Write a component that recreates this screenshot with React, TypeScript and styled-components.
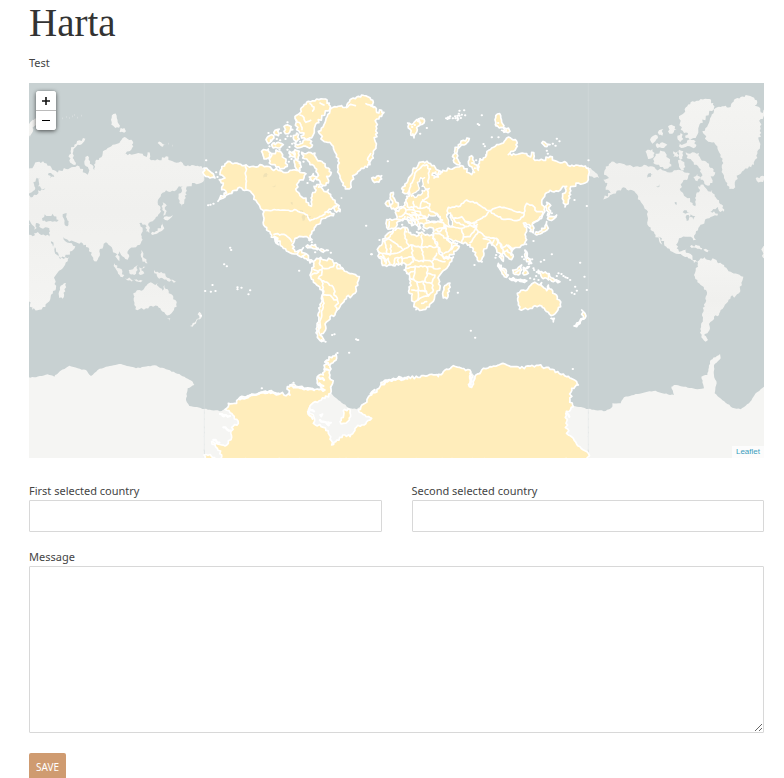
import React from "react";
import styled, { createGlobalStyle } from "styled-components";

const GlobalStyle = createGlobalStyle`
  *, *::before, *::after { box-sizing: border-box; }
  body {
    margin: 0;
    background: #fff;
    color: #444;
    font-family: "Noto Sans", "Open Sans", sans-serif;
    font-size: 11px;
    line-height: 16px;
  }
`;

/* ---------- map geometry ---------- */

type Region = { dx: number; dy: number; land: string[]; water?: string[]; borders?: string[]; dots?: string };

const WORLD = 1152;

const regions: Region[] = [
  {
    dx: -12,
    dy: 0,
    land: [
      "62,262 75,243 90,236 105,240 138,246 160,250 180,245 200,250 215,258 235,262 250,268 270,262 290,262 300,268 318,272 312,285 298,292 290,305 290,325 300,338 318,345 326,366 334,370 336,350 336,335 345,328 342,310 350,305 365,315 372,325 385,320 392,340 405,352 412,365 402,372 388,378 375,388 390,385 402,392 400,398 380,402 362,415 347,430 336,445 330,458 336,470 328,472 320,461 305,461 285,466 280,481 278,496 285,506 298,502 310,494 306,509 320,513 326,531 340,536 330,540 310,521 290,513 270,509 250,496 240,481 228,463 222,460 235,485 228,480 215,456 210,446 195,431 192,406 192,386 180,371 168,352 155,330 145,322 125,315 105,322 88,332 70,345 54,355 60,345 80,330 65,320 70,300 58,290 75,285 60,275",
      "355,145 372,125 382,100 395,75 410,72 425,68 440,72 450,50 470,42 485,36 505,42 520,58 512,68 525,72 530,88 545,82 552,88 545,100 530,108 528,130 532,150 524,170 528,190 520,205 520,225 510,245 495,250 480,262 465,275 455,292 448,318 436,318 430,300 420,285 415,260 418,240 410,215 400,190 390,178 368,172 362,155",
      "515,285 530,280 545,278 545,288 530,296 518,293",
      "290,140 288,120 285,100 300,90 310,70 325,55 350,48 370,48 388,60 390,75 375,90 365,105 350,120 345,130 340,155 335,165 318,170 305,165 312,150 300,150",
      "310,172 335,175 335,192 305,192 285,190 282,180 300,183",
      "252,130 268,128 278,140 265,152 252,145",
      "198,170 215,155 222,165 205,182",
      "225,142 238,138 235,158 225,155",
      "215,185 235,178 250,185 240,195 220,195",
      "190,200 205,198 212,210 205,225 192,228 188,212",
      "215,212 235,205 248,215 258,235 262,250 240,258 225,245 208,240",
      "268,205 282,205 280,222 268,222",
      "285,200 298,205 295,228 285,225",
      "282,232 294,234 304,252 300,262 288,256",
      "280,165 290,150 298,168 288,178",
      "305,208 325,208 345,210 350,228 370,240 385,255 392,275 380,280 385,300 372,308 360,295 350,290 352,270 345,255 330,245 320,228 308,225",
      "328,282 340,272 350,285 340,295",
      "402,376 412,364 420,386 405,384",
      "318,490 335,485 355,496 352,500 335,494",
      "358,500 385,502 370,508",
      "12,255 30,265 45,285 30,285 12,275",
    ],
    water: [
      "190,277 200,270 208,276 200,282 190,284",
      "216,310 226,304 226,312",
      "272,357 278,358 278,366",
      "296,388 308,382 318,390 304,392",
      "308,396 314,396 314,412 308,414",
      "320,394 334,400 328,410 318,402",
    ],
    borders: [
      "138,246 138,318",
      "192,382 290,382 305,389 322,396 330,413 350,406 365,399 375,393",
      "222,454 245,454 262,461 275,476",
      "298,502 292,512",
      "318,514 306,520",
      "300,96 312,104 318,118 332,112",
      "330,62 342,72 338,84",
      "288,112 302,124 306,140",
      "360,60 372,66",
      "512,212 504,224 506,240",
      "498,62 510,66 522,74",
      "440,74 452,64 466,68",
      "425,345 424,345",
    ],
    dots: "18,232 24,367 31,365 40,362 392,509 335,478 328,472 345,508 345,485 48,268 62,345 205,150 262,118 242,150 230,168 212,172 222,180 208,190 240,172 272,160 276,182 262,160 256,168 300,176 268,192 274,228 266,236 262,200 298,240 310,236 238,200 228,202 330,290 322,300 356,312 366,310 76,330 96,328 52,282",
  },
  {
    dx: -12,
    dy: 351,
    land: [
      "340,185 350,175 362,172 375,180 392,178 402,190 420,195 430,208 440,215 460,222 478,230 475,242 467,260 465,280 455,288 440,290 432,305 420,320 410,330 405,345 390,350 385,362 375,372 378,385 370,400 360,405 372,420 365,425 352,412 348,398 352,370 355,340 362,320 365,290 366,270 350,255 340,240 330,225 335,212 342,200",
    ],
    borders: [
      "362,174 358,190 368,204 380,206 390,202 400,200 402,190",
      "412,195 412,206 420,206 430,208",
      "340,208 355,216 368,204 365,225 355,235 365,242 385,250 400,262 405,275 402,285 412,295 415,310 405,318 412,330",
      "366,285 372,310 365,340 360,370 358,400",
      "368,285 385,285 395,290 402,300 412,300",
      "335,225 350,220 356,216",
      "366,245 370,262 368,285",
      "350,400 356,380 352,370",
    ],
    dots: "90,143 93,150 72,193 80,199 37,255 15,273 32,275 46,273 112,262 124,263 112,268 150,271 145,283 297,212 498,77 515,163 2,347 396,405 403,403 468,418 474,420",
  },
  {
    dx: 498,
    dy: 0,
    land: [
      "50,433 50,410 60,408 78,408 80,398 76,388 88,378 100,370 108,355 110,340 120,335 118,325 105,332 98,328 98,312 110,300 120,280 128,262 145,245 160,236 175,240 185,248 205,262 212,272 200,275 188,270 192,285 205,282 205,270 218,262 240,258 262,252 280,250 298,270 305,275 310,262 300,250 295,235 298,222 305,218 312,235 318,245 325,262 328,235 340,225 350,212 365,195 380,185 400,180 410,165 425,168 440,175 442,190 430,205 415,215 430,212 450,212 470,212 482,222 485,208 492,215 495,232 520,232 540,220 560,235 590,240 600,250 635,248 655,255 655,290 645,300 625,300 610,310 600,318 602,335 595,355 585,372 580,360 578,340 588,325 590,310 575,315 565,325 540,322 520,345 515,358 522,370 525,385 515,400 500,415 488,420 492,435 490,450 480,445 482,430 470,425 460,420 470,440 465,455 470,470 462,485 450,493 430,498 425,505 430,520 425,530 418,528 405,515 400,505 395,515 400,535 392,525 388,510 380,500 372,488 360,478 352,490 340,505 335,530 325,535 315,515 310,498 300,485 285,478 270,478 262,475 245,470 232,462 238,475 250,480 268,490 262,500 245,515 225,525 218,520 210,500 195,475 190,460 192,445 190,436 165,435 162,425 150,420 152,435 145,440 138,425 130,412 120,405 112,402 120,412 132,425 125,428 115,415 105,408 95,412 85,415 82,425 75,435 60,438",
      "62,330 70,328 72,345 85,368 80,378 65,378 62,365 68,355 60,345",
      "50,355 58,352 60,368 50,368",
      "250,215 255,200 265,185 280,172 298,167 295,175 275,185 262,205 260,225 270,240 262,245 250,232",
      "113,120 130,122 140,110 150,120 142,140 132,165 122,150 115,135",
      "145,108 162,108 162,120 150,125",
      "375,110 382,93 392,98 395,118 402,128 388,135 376,125",
      "395,142 415,135 420,145 402,148",
      "515,180 525,178 540,185 525,190",
      "530,358 538,362 538,395 532,398",
      "25,505 28,490 38,475 50,455 70,440 85,435 105,433 112,435 115,448 130,455 140,460 145,450 160,452 185,455 190,465 195,480 205,500 218,520 222,528 250,522 245,535 225,560 210,575 207,590 210,615 195,635 190,655 178,672 160,680 138,680 132,665 125,640 118,618 122,595 118,575 108,565 108,552 102,540 85,545 70,548 50,550 35,540 28,525",
      "222,620 230,605 240,600 238,625 230,647 220,645",
    ],
    water: [
      "168,406 176,394 188,399 200,392 204,400 218,411 200,416 180,417 170,414",
      "230,394 242,390 240,402 248,415 245,430 236,425 234,408",
      "152,284 142,298 148,315 132,330 124,340 140,342 152,336 156,322 178,316 156,310 158,295 164,284",
    ],
  },
  {
    dx: 498,
    dy: 321,
    land: [
      "443,325 442,310 460,300 475,295 485,282 500,280 508,285 515,278 518,290 530,302 535,285 545,298 555,312 568,330 572,350 560,365 550,375 538,372 525,360 515,348 495,347 480,355 460,358 448,358 445,345",
      "543,385 553,385 550,396",
      "635,360 645,370 648,378 635,388 620,410 612,408 630,392 640,378",
      "535,80 548,80 560,75 550,88 538,90",
      "530,95 535,115 515,130 500,135 495,132 515,122 525,108",
      "465,180 472,190 475,205 485,220 470,215 465,200",
      "385,220 400,235 415,255 410,262 395,245 383,228",
      "418,265 445,270 470,272 450,274 420,268",
      "428,240 445,232 455,225 455,240 445,255 430,250",
      "460,232 478,230 465,240 475,250 462,255",
      "505,240 515,245 530,250 550,265 570,275 550,275 530,265 515,262 505,250",
    ],
    borders: [
      "38,155 60,140 70,125",
      "50,145 62,150 100,180 108,175 118,168 105,145 105,115",
      "118,168 128,165 155,175 155,135",
      "155,170 200,170",
      "45,150 50,190 62,193 62,165",
      "25,185 60,195 75,190 100,180",
      "70,225 75,205 95,200 95,225",
      "95,205 128,200 125,165",
      "110,225 130,215 128,200",
      "128,200 135,210 160,215 155,175",
      "160,210 185,215 195,200 200,190",
      "185,215 190,235 210,235",
      "190,205 225,215",
      "135,230 130,265 140,275 165,275 172,255 170,230 135,228",
      "120,265 140,275 145,300 125,300",
      "145,300 165,305 160,275",
      "165,275 185,280 195,255 175,250",
      "145,300 145,325 135,335",
      "145,330 160,320 175,315 165,300",
      "185,280 190,300 175,318",
      "155,340 170,335",
      "110,235 135,230",
      "110,250 130,245",
      "170,232 190,232",
      "85,205 85,225",
      "55,205 60,225",
      "30,200 45,205 48,222",
      "38,195 45,215 55,205",
      "232,75 235,52 265,50 290,30 320,38 345,55 358,62 350,75 325,90 310,100 290,95 275,80 250,85 245,75",
      "358,62 390,50 430,62 462,68 460,80 440,92 400,88 375,75 358,62",
      "462,68 470,40 490,48 500,65 518,65 515,85 490,100",
      "465,105 480,115",
      "310,100 325,125 345,140 375,145 385,150 380,165",
      "325,125 310,145 300,158",
      "340,146 358,150 365,165 372,150",
      "222,103 235,110 245,110 275,115 280,140 275,158",
      "225,105 235,140",
      "275,115 300,105 320,110 300,140 280,140",
      "250,85 255,95 290,110",
      "285,95 300,100 320,98",
      "300,106 312,112 322,104",
      "385,150 395,175 410,165 420,175 425,185",
      "400,190 412,180 424,196",
      "410,165 430,175",
      "380,145 395,165 400,190 395,200",
      "165,100 185,95 220,98 225,115 200,117",
      "195,120 210,125 225,110",
      "195,130 215,135 245,160 240,180 222,190",
      "240,180 262,160",
      "108,35 112,50 130,52 135,70",
      "130,35 132,50 150,55 155,35",
      "76,57 95,50 108,60 100,75 88,80",
      "80,88 98,92 105,80",
      "110,60 130,60 150,65 150,75 125,75",
      "150,55 170,50 185,65 205,75 215,95",
      "135,75 145,95 140,105",
      "118,72 128,82 136,96",
      "126,68 140,72 148,84",
      "155,35 175,20 172,0",
      "158,30 180,42 175,55",
      "105,68 125,75 130,90 142,88",
      "145,88 168,85",
      "150,75 165,78 170,90",
      "58,95 56,112",
      "115,14 122,-11 135,-51 155,-71 170,-76",
      "170,-76 178,-56 175,-21",
      "535,252 535,270",
      "465,182 470,196 480,214",
      "388,226 402,242 410,258",
      "420,267 446,271 470,273",
      "436,248 448,240",
    ],
    dots: "490,235 480,265 492,268 505,270 615,290 620,302 605,308 613,312 650,300 643,260 630,218 545,193 522,210 512,215 263,308 302,422 315,443 313,225 376,203 378,195 650,48 613,30 28,150 3,193 335,215 490,153 565,250 580,258 600,270 592,264 468,163 545,70 103,240 120,128 140,126 492,240 108,125 96,104 476,222 456,200 462,208 486,208 498,258 500,246 560,258 574,252 586,262 158,118 150,112 162,122 146,128",
  },
  {
    dx: 498,
    dy: 0,
    land: [],
    dots: "228,106 234,103 240,100 248,106 255,100 262,98 266,92 268,83 275,95 272,105 285,97 282,82 262,112 256,106 262,104 268,98 264,108 238,106 232,108 335,97 323,123 327,126 340,183 344,190 365,163 385,163 548,182 556,188 560,167 568,175 530,203 533,212 655,232 170,135 185,112 53,235 126,132 134,126 128,154 150,152 142,112 156,106 384,120 378,128 402,136 408,142 306,240 318,232 314,256 330,228 348,216 312,268 180,258 196,268 100,320 104,308",
  },
];

const iceSheet =
  "125,360 125,345 112,325 95,305 110,310 125,315 135,318 145,310 155,292 155,262 175,250 170,238 150,218 135,208 145,200 145,190 170,190 180,172 215,162 250,155 275,152 295,160 330,165 322,140 330,135 360,140 400,148 435,150 415,135 412,110 430,105 440,60 468,42 470,55 450,75 450,105 458,130 452,160 435,175 405,185 385,210 400,225 400,250 430,262 445,280 455,315 470,300 495,285 510,290 525,265 545,255 575,235 555,225 535,210 555,190 575,165 600,140 610,125 640,115 680,112 720,112 755,103 775,110 790,95 820,77 845,85 870,90 875,105 868,140 875,142 885,110 905,90 930,80 975,72 1005,80 1020,85 1075,76 1110,88 1150,102 1190,125 1195,135 1175,145 1170,180 1180,200 1162,215 1158,250 1165,285 1180,295 1200,320 1225,340 1225,360";
const iceIslands = ["490,212 504,206 510,218 508,240 490,250 480,245 490,232", "72,345 84,346 104,353 100,362 72,362", "125,222 135,224 132,230", "444,246 454,248 448,252", "420,225 428,222 424,230"];
const iceShelf =
  "72,207 125,213 145,200 145,190 170,190 180,172 215,162 250,155 275,152 295,160 330,165 322,140 330,135 360,140 400,148 420,145 412,110 430,105 440,60 468,42 470,55 450,75 450,105 458,130 452,160 505,203 530,208 555,190 575,160 600,140 610,125 640,115 680,112 720,112 755,103 775,110 790,95 820,77 845,85 870,90 885,108 905,90 930,80 975,72 1005,80 1020,85 1075,76 1110,88 1150,102 1190,125 1195,135 1175,145 1170,180 1180,198 1225,207 1225,362 72,362";

/* Splits each edge into short steps with a small repeatable offset, which gives a ragged coastline. */
function coast(points: string, closed = true, amount = 9, step = 6): string {
  const pts = points.split(" ").map((p) => p.split(",").map(Number));
  const noise = (x: number, y: number) => {
    const v = Math.sin(x * 12.9898 + y * 78.233) * 43758.5453;
    return v - Math.floor(v) - 0.5;
  };
  const out: string[] = [];
  const edges = closed ? pts.length : pts.length - 1;
  for (let i = 0; i < edges; i++) {
    const [x1, y1] = pts[i];
    const [x2, y2] = pts[(i + 1) % pts.length];
    const length = Math.hypot(x2 - x1, y2 - y1) || 1;
    const n = Math.max(1, Math.round(length / step));
    for (let k = 0; k < n; k++) {
      const t = k / n;
      const x = x1 + (x2 - x1) * t;
      const y = y1 + (y2 - y1) * t;
      const off = k === 0 ? 0 : noise(x, y) * amount;
      out.push(`${(x - ((y2 - y1) / length) * off).toFixed(1)} ${(y + ((x2 - x1) / length) * off).toFixed(1)}`);
    }
  }
  if (!closed) out.push(pts[pts.length - 1].join(" "));
  return `M${out.join("L")}${closed ? "Z" : ""}`;
}

const dotPath = (dots: string) =>
  dots
    .split(" ")
    .map((p) => `M${p.replace(",", " ")}h1`)
    .join("");

const shift = (r: { dx: number; dy: number }) => `translate(${r.dx} ${r.dy})`;
const ice = { dx: -72, dy: 771 };

const BaseWorld = () => (
  <g id="base-world">
    {regions.map((r, i) => (
      <g key={i} transform={shift(r)}>
        <path d={r.land.map((l) => coast(l)).join("")} fill="url(#relief)" />
        {r.water && <path d={r.water.map((l) => coast(l)).join("")} fill="#c8d1d2" />}
      </g>
    ))}
    <path d={dotPath("726,106 738,102 748,105 756,100 764,96 772,104 784,98 1046,182 1056,188")} stroke="#f3f3f1" strokeWidth={5} />
    <path transform={shift(ice)} d={coast(iceShelf, true, 3)} fill="#f5f5f3" />
  </g>
);

const CountryLayer = () => (
  <g stroke="#fff" strokeWidth={5} strokeLinejoin="round" strokeLinecap="round">
    {regions.map((r, i) => (
      <g key={i} transform={shift(r)}>
        <path d={r.land.map((l) => coast(l)).join("")} fill="#ffedbb" />
        {r.water && i > 0 && <path d={r.water.map((l) => coast(l)).join("")} fill="#c8d1d2" strokeWidth={4} />}
        {r.water && i === 0 && <path d={r.water.map((l) => coast(l)).join("")} fill="#f0e2b6" stroke="none" />}
        {r.borders && <path d={r.borders.map((l) => coast(l, false, 5)).join("")} fill="none" />}
        {r.dots && <path d={dotPath(r.dots)} fill="none" strokeWidth={6} />}
      </g>
    ))}
    <g transform={shift(ice)}>
      <path d={coast(iceSheet, true, 9, 6) + iceIslands.map((l) => coast(l)).join("")} fill="#ffedbb" />
      <path
        d={[
          "180,178 215,165 250,157 278,157 296,162",
          "330,137 360,144 402,150",
          "416,112 432,120",
          "418,130 430,138",
          "436,66 446,74",
          "436,88 446,90",
          "606,133 640,118 682,116",
          "388,205 402,214",
          "384,215 398,236",
          "420,240 446,256",
          "120,222 150,228",
          "130,262 152,272",
          "100,300 118,308",
          "572,162 584,150",
          "1160,215 1168,230",
          "870,108 872,134",
        ]
          .map((l) => coast(l, false, 7))
          .join("")}
        fill="none"
        strokeWidth={7}
      />
      <path d={dotPath("472,39 507,38 532,0 430,2 436,5 424,0 1178,87 245,145 340,128")} fill="none" strokeWidth={6} />
    </g>
  </g>
);

const WorldMap = () => (
  <MapDrawing viewBox="-525 0 2205 1125" preserveAspectRatio="xMidYMid slice" role="img" aria-label="World map">
    <defs>
      <linearGradient id="relief" x1="0" y1="0" x2="0" y2="1">
        <stop offset="0" stopColor="#f4f4f2" />
        <stop offset="0.5" stopColor="#f0f0ee" />
        <stop offset="1" stopColor="#f4f4f2" />
      </linearGradient>
    </defs>
    <BaseWorld />
    <use href="#base-world" x={-WORLD} />
    <use href="#base-world" x={WORLD} />
    <path d="M1 0V1125M1153 0V1125" stroke="#dde3e3" strokeWidth={3} opacity={0.35} />
    <CountryLayer />
  </MapDrawing>
);

/* ---------- page parts ---------- */

const Page = styled.main`
  padding: 0 20px 0 29px;
`;

const Title = styled.h1`
  margin: 0;
  padding-top: 1px;
  color: #333;
  font: 400 39px/44px "Liberation Serif", serif;
`;

const Intro = styled.p`
  margin: 10px 0 12px;
`;

const MapFrame = styled.section`
  position: relative;
  height: 375px;
  overflow: hidden;
  background: #c8d1d2;
`;

const MapDrawing = styled.svg`
  display: block;
  width: 100%;
  height: 100%;
`;

const ZoomControl = styled.div`
  position: absolute;
  top: 8px;
  left: 7px;
  width: 20px;
  border-radius: 3px;
  background: #fff;
  box-shadow: 0 1px 4px rgba(0, 0, 0, 0.65);
  overflow: hidden;
`;

const ZoomButton = styled.button`
  display: flex;
  align-items: center;
  justify-content: center;
  width: 100%;
  height: 19px;
  padding: 0;
  border: 0;
  background: #fff;
  color: #000;
  cursor: pointer;

  & + & {
    height: 20px;
    border-top: 1px solid #bbb;
  }
`;

const Attribution = styled.a`
  position: absolute;
  right: 0;
  bottom: 0;
  padding: 0 4px;
  background: rgba(255, 255, 255, 0.7);
  color: #3a9cbd;
  font: 8px/12px "Liberation Sans", sans-serif;
  text-decoration: none;
`;

const Form = styled.form`
  display: grid;
  grid-template-columns: 1fr 1fr;
  gap: 17px 30px;
  padding-top: 25px;
`;

const Field = styled.div<{ $wide?: boolean }>`
  display: flex;
  flex-direction: column;
  gap: 1px;
  grid-column: ${(p) => (p.$wide ? "1 / -1" : "auto")};
`;

const TextInput = styled.input`
  width: 100%;
  height: 32px;
  padding: 6px 8px;
  border: 1px solid #d8d8d8;
  border-radius: 1px;
  background: #fff;
  color: inherit;
  font: inherit;
`;

const TextArea = styled.textarea`
  width: 100%;
  height: 167px;
  padding: 6px 8px;
  border: 1px solid #d8d8d8;
  border-radius: 1px;
  background: #fff;
  color: inherit;
  font: inherit;
  resize: vertical;
`;

const SaveButton = styled.button`
  justify-self: start;
  width: 37px;
  height: 28px;
  margin-top: 3px;
  padding: 0;
  border: 0;
  border-radius: 2px;
  background: #cf9b70;
  color: #fff;
  font: 10px/28px "Noto Sans", sans-serif;
  cursor: pointer;
`;

export default function App() {
  return (
    <>
      <GlobalStyle />
      <Page>
        <Title>Harta</Title>
        <Intro>Test</Intro>
        <MapFrame>
          <WorldMap />
          <ZoomControl>
            <ZoomButton type="button" aria-label="Zoom in">
              <svg width="10" height="10" viewBox="0 0 10 10">
                <path d="M1 5h8M5 1v8" stroke="#111" strokeWidth="1.6" />
              </svg>
            </ZoomButton>
            <ZoomButton type="button" aria-label="Zoom out">
              <svg width="10" height="10" viewBox="0 0 10 10">
                <path d="M1 4.5h8" stroke="#000" />
              </svg>
            </ZoomButton>
          </ZoomControl>
          <Attribution href="#leaflet">Leaflet</Attribution>
        </MapFrame>
        <Form onSubmit={(e) => e.preventDefault()}>
          <Field>
            <label htmlFor="first-country">First selected country</label>
            <TextInput id="first-country" type="text" />
          </Field>
          <Field>
            <label htmlFor="second-country">Second selected country</label>
            <TextInput id="second-country" type="text" />
          </Field>
          <Field $wide>
            <label htmlFor="message">Message</label>
            <TextArea id="message" />
          </Field>
          <SaveButton type="submit">SAVE</SaveButton>
        </Form>
      </Page>
    </>
  );
}
